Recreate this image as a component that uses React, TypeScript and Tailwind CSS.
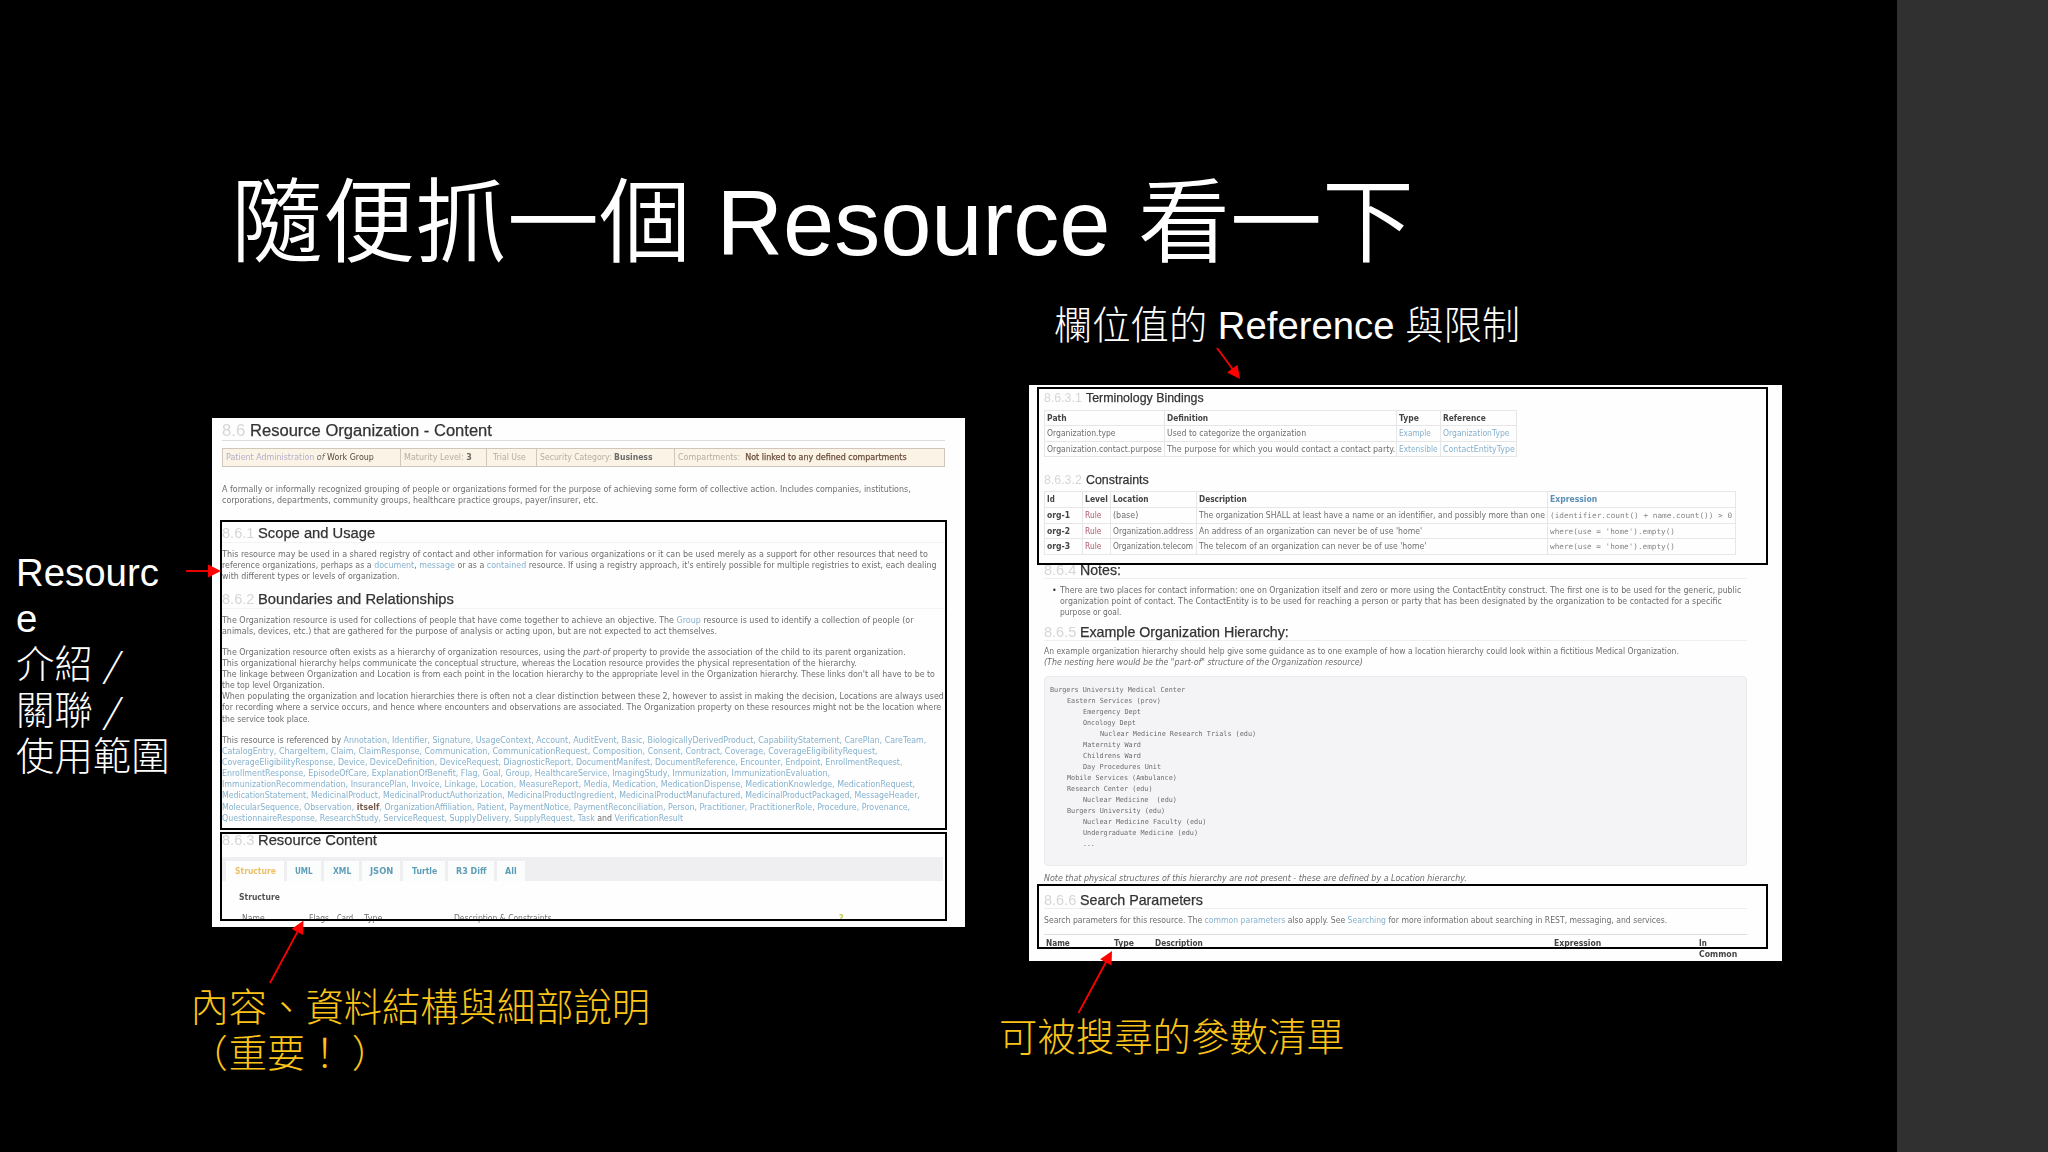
import { useLayoutEffect, useRef, useState, type ReactNode } from "react";

/* A single line of text condensed or expanded to an exact width. */
function Fit({ w, className = "", children }: { w: number; className?: string; children: ReactNode }) {
  const ref = useRef<HTMLSpanElement>(null);
  const [scale, setScale] = useState(1);
  useLayoutEffect(() => {
    if (ref.current) setScale(w / ref.current.offsetWidth);
  }, [w]);
  return (
    <div className={`whitespace-pre ${className}`} style={{ width: w }}>
      <span ref={ref} className="inline-block origin-left" style={{ transform: `scaleX(${scale})` }}>
        {children}
      </span>
    </div>
  );
}

function A({ children }: { children: ReactNode }) {
  return <span className="text-[#85b1cd]">{children}</span>;
}

function Heading({ num, numW, gap, w, className, children }: { num: string; numW: number; gap: string; w: number; className: string; children: ReactNode }) {
  return (
    <div className={`flex font-['Liberation_Sans',sans-serif] ${gap} ${className}`}>
      <Fit w={numW} className="text-[#d6d6d6]">{num}</Fit>
      <Fit w={w} className="text-[#333] [-webkit-text-stroke:0.25px_#333]">{children}</Fit>
    </div>
  );
}

const scopeLines: [number, ReactNode][] = [
  [706, "This resource may be used in a shared registry of contact and other information for various organizations or it can be used merely as a support for other resources that need to"],
  [714, <>reference organizations, perhaps as a <A>document</A>, <A>message</A> or as a <A>contained</A> resource. If using a registry approach, it's entirely possible for multiple registries to exist, each dealing</>],
  [178, "with different types or levels of organization."],
];
const boundaryLines: [number, ReactNode][] = [
  [691, <>The Organization resource is used for collections of people that have come together to achieve an objective. The <A>Group</A> resource is used to identify a collection of people (or</>],
  [495, "animals, devices, etc.) that are gathered for the purpose of analysis or acting upon, but are not expected to act themselves."],
];
const hierarchyLines: [number, ReactNode][] = [
  [684, <>The Organization resource often exists as a hierarchy of organization resources, using the <i>part-of</i> property to provide the association of the child to its parent organization.</>],
  [635, "This organizational hierarchy helps communicate the conceptual structure, whereas the Location resource provides the physical representation of the hierarchy."],
  [713, "The linkage between Organization and Location is from each point in the location hierarchy to the appropriate level in the Organization hierarchy. These links don't all have to be to"],
  [103, "the top level Organization."],
  [722, "When populating the organization and location hierarchies there is often not a clear distinction between these 2, however to assist in making the decision, Locations are always used"],
  [719, "for recording where a service occurs, and hence where encounters and observations are associated. The Organization property on these resources might not be the location where"],
  [88, "the service took place."],
];
const referencedLines: [number, ReactNode][] = [
  [704, <>This resource is referenced by <A>Annotation, Identifier, Signature, UsageContext, Account, AuditEvent, Basic, BiologicallyDerivedProduct, CapabilityStatement, CarePlan, CareTeam,</A></>],
  [656, <A>CatalogEntry, ChargeItem, Claim, ClaimResponse, Communication, CommunicationRequest, Composition, Consent, Contract, Coverage, CoverageEligibilityRequest,</A>],
  [680, <A>CoverageEligibilityResponse, Device, DeviceDefinition, DeviceRequest, DiagnosticReport, DocumentManifest, DocumentReference, Encounter, Endpoint, EnrollmentRequest,</A>],
  [608, <A>EnrollmentResponse, EpisodeOfCare, ExplanationOfBenefit, Flag, Goal, Group, HealthcareService, ImagingStudy, Immunization, ImmunizationEvaluation,</A>],
  [693, <A>ImmunizationRecommendation, InsurancePlan, Invoice, Linkage, Location, MeasureReport, Media, Medication, MedicationDispense, MedicationKnowledge, MedicationRequest,</A>],
  [698, <A>MedicationStatement, MedicinalProduct, MedicinalProductAuthorization, MedicinalProductIngredient, MedicinalProductManufactured, MedicinalProductPackaged, MessageHeader,</A>],
  [688, <><A>MolecularSequence, Observation, </A><b className="text-[#775c50]">itself</b><A>, OrganizationAffiliation, Patient, PaymentNotice, PaymentReconciliation, Person, Practitioner, PractitionerRole, Procedure, Provenance,</A></>],
  [461, <><A>QuestionnaireResponse, ResearchStudy, ServiceRequest, SupplyDelivery, SupplyRequest, Task</A> and <A>VerificationResult</A></>],
];

function Lines({ items, className = "" }: { items: [number, ReactNode][]; className?: string }) {
  return (
    <div className={className}>
      {items.map(([w, t], i) => (
        <Fit key={i} w={w}>{t}</Fit>
      ))}
    </div>
  );
}

const tabs: [string, number, string][] = [
  ["UML", 18, "w-[34px]"],
  ["XML", 18, "w-[35px]"],
  ["JSON", 23, "w-[38px]"],
  ["Turtle", 25, "w-[42px]"],
  ["R3 Diff", 30, "w-[46px]"],
  ["All", 12, "w-[28px]"],
];

function ContentPage() {
  return (
    <div className="h-[509px] w-[753px] overflow-hidden bg-[#fefefe]">
      <div className="flex w-[723px] flex-col pl-[10px] pt-[3px] text-[8px] leading-[11px] text-[#6d6d6d] blur-[0.55px] [box-sizing:content-box]">
        <Heading num="8.6" numW={23} gap="gap-[5px]" w={242} className="h-[20px] border-b border-[#dcdcdc] text-[16px] leading-[20px]">Resource Organization - Content</Heading>
        <div className="mt-[7px] grid h-[19px] grid-cols-[178px_86px_50px_138px_271px] divide-x divide-[#cfc8ba] border border-[#cfc8ba] bg-[#fbf4e6] [&>div]:pl-[3px] [&>div]:pt-[3px]">
          <div><Fit w={148}><span className="text-[#b3aeca]">Patient Administration</span> <i>of</i> <span className="text-[#55483c]">Work Group</span></Fit></div>
          <div><Fit w={68}><span className="text-[#b5aea0]">Maturity Level:</span> <b>3</b></Fit></div>
          <div className="!pl-[6px]"><Fit w={33} className="text-[#b5aea0]">Trial Use</Fit></div>
          <div><Fit w={113}><span className="text-[#b5aea0]">Security Category:</span> <b>Business</b></Fit></div>
          <div><Fit w={229}><span className="text-[#b5aea0]">Compartments:</span>  <span className="text-[#6b4e3c] [-webkit-text-stroke:0.25px_#6b4e3c]">Not linked to any defined compartments</span></Fit></div>
        </div>
        <Lines className="mt-[17px]" items={[
          [689, "A formally or informally recognized grouping of people or organizations formed for the purpose of achieving some form of collective action. Includes companies, institutions,"],
          [376, "corporations, departments, community groups, healthcare practice groups, payer/insurer, etc."],
        ]} />
        <Heading num="8.6.1" numW={32} gap="gap-[4px]" w={117} className="mt-[18px] h-[19px] border-b border-[#f3f3f3] text-[15.5px] leading-[18px]">Scope and Usage</Heading>
        <Lines className="mt-[6px]" items={scopeLines} />
        <Heading num="8.6.2" numW={32} gap="gap-[4px]" w={196} className="mt-[8px] h-[19px] border-b border-[#f3f3f3] text-[15.5px] leading-[18px]">Boundaries and Relationships</Heading>
        <Lines className="mt-[6px]" items={boundaryLines} />
        <Lines className="mt-[10px] leading-[11.1px]" items={hierarchyLines} />
        <Lines className="mt-[10px] leading-[11.15px]" items={referencedLines} />
        <Heading num="8.6.3" numW={32} gap="gap-[4px]" w={119} className="mt-[7.5px] h-[19px] text-[15.5px] leading-[18px]">Resource Content</Heading>
        <div className="mt-[7px] flex h-[24px] w-[721px] gap-[3px] bg-[#efeef0] pl-[4px] pt-[4px] font-bold">
          <div className="flex w-[58px] items-center justify-center bg-[#fefefe] text-[#eac069]"><Fit w={41}>Structure</Fit></div>
          {tabs.map(([t, w, cls]) => (
            <div key={t} className={`flex items-center justify-center bg-[#fbfdfd] text-[#5d9db8] ${cls}`}><Fit w={w}>{t}</Fit></div>
          ))}
        </div>
        <Fit w={41} className="ml-[17px] mt-[11px] font-bold text-[#555]">Structure</Fit>
        <div className="mt-[10px] grid grid-cols-[67px_28px_27px_90px_385px_20px] pl-[20px]">
          <Fit w={23}>Name</Fit>
          <Fit w={20}>Flags</Fit>
          <Fit w={18}>Card.</Fit>
          <Fit w={18}>Type</Fit>
          <Fit w={98}>Description &amp; Constraints</Fit>
          <b className="text-[#c3cc4b]">?</b>
        </div>
      </div>
    </div>
  );
}

const orgTree: [number, string, number][] = [
  [0, "Burgers University Medical Center", 135],
  [1, "Eastern Services (prov)", 94],
  [2, "Emergency Dept", 58],
  [2, "Oncology Dept", 53],
  [3, "Nuclear Medicine Research Trials (edu)", 156],
  [2, "Maternity Ward", 58],
  [2, "Childrens Ward", 58],
  [2, "Day Procedures Unit", 78],
  [1, "Mobile Services (Ambulance)", 110],
  [1, "Research Center (edu)", 86],
  [2, "Nuclear Medicine  (edu)", 94],
  [1, "Burgers University (edu)", 98],
  [2, "Nuclear Medicine Faculty (edu)", 123],
  [2, "Undergraduate Medicine (edu)", 115],
  [2, "...", 12],
];
const indent = ["pl-0", "pl-[16.5px]", "pl-[33px]", "pl-[49.5px]"];

const constraints: [string, string, number, string, number, string, number][] = [
  ["org-1", "(base)", 25, "The organization SHALL at least have a name or an identifier, and possibly more than one", 346, "(identifier.count() + name.count()) > 0", 182],
  ["org-2", "Organization.address", 80, "An address of an organization can never be of use 'home'", 223, "where(use = 'home').empty()", 125],
  ["org-3", "Organization.telecom", 80, "The telecom of an organization can never be of use 'home'", 227, "where(use = 'home').empty()", 125],
];

function BindingsPage() {
  return (
    <div className="h-[575.5px] w-[753px] overflow-hidden bg-[#fefefe]">
      <div className="flex w-[703px] flex-col pl-[15px] pt-[5px] text-[8px] leading-[11px] text-[#6d6d6d] blur-[0.55px] [box-sizing:content-box]">
        <Heading num="8.6.3.1" numW={38} gap="gap-[4px]" w={118} className="h-[16px] text-[13px] leading-[16px]">Terminology Bindings</Heading>
        <div className="mt-[4px] w-[473px] border-x border-b border-[#e6e6e6] [&>div]:grid [&>div]:grid-cols-[120px_232px_44px_77px] [&>div]:divide-x [&>div]:divide-[#e6e6e6] [&>div]:border-t [&>div]:border-[#e6e6e6] [&>div>div]:pl-[2px] [&>div>div]:pt-[1.5px]">
          <div className="h-[15px] font-bold text-[#444]">
            <div><Fit w={20}>Path</Fit></div>
            <div><Fit w={41}>Definition</Fit></div>
            <div><Fit w={20}>Type</Fit></div>
            <div><Fit w={43}>Reference</Fit></div>
          </div>
          <div className="h-[16px]">
            <div><Fit w={69}>Organization.type</Fit></div>
            <div><Fit w={139}>Used to categorize the organization</Fit></div>
            <div><Fit w={32}><A>Example</A></Fit></div>
            <div><Fit w={67}><A>OrganizationType</A></Fit></div>
          </div>
          <div className="h-[15px]">
            <div><Fit w={115}>Organization.contact.purpose</Fit></div>
            <div><Fit w={228}>The purpose for which you would contact a contact party.</Fit></div>
            <div><Fit w={39}><A>Extensible</A></Fit></div>
            <div><Fit w={72}><A>ContactEntityType</A></Fit></div>
          </div>
        </div>
        <Heading num="8.6.3.2" numW={38} gap="gap-[4px]" w={63} className="mt-[15px] h-[16px] text-[13px] leading-[16px]">Constraints</Heading>
        <div className="mt-[3px] w-[692px] border-x border-b border-[#e9e6e9] [&>div]:grid [&>div]:grid-cols-[38px_28px_86px_351px_189px] [&>div]:divide-x [&>div]:divide-[#e9e6e9] [&>div]:border-t [&>div]:border-[#e9e6e9] [&>div>div]:pl-[2px] [&>div>div]:pt-[2px]">
          <div className="h-[16px] font-bold text-[#444]">
            <div><Fit w={8}>Id</Fit></div>
            <div><Fit w={23}>Level</Fit></div>
            <div><Fit w={36}>Location</Fit></div>
            <div><Fit w={48}>Description</Fit></div>
            <div className="text-[#5b8fb4]"><Fit w={47}>Expression</Fit></div>
          </div>
          {constraints.map(([id, loc, lw, desc, dw, expr, ew]) => (
            <div key={id} className="h-[15.7px]">
              <div><Fit w={23} className="font-bold text-[#444]">{id}</Fit></div>
              <div><Fit w={16} className="text-[#b0596c]">Rule</Fit></div>
              <div><Fit w={lw}>{loc}</Fit></div>
              <div><Fit w={dw}>{desc}</Fit></div>
              <div><Fit w={ew} className="font-['DejaVu_Sans_Mono',monospace] text-[7.5px] text-[#858585]">{expr}</Fit></div>
            </div>
          ))}
        </div>
        <Heading num="8.6.4" numW={32} gap="gap-[4px]" w={41} className="mt-[5.5px] h-[18px] border-b border-[#eeeeee] text-[14.5px] leading-[18px]">Notes:</Heading>
        <div className="mt-[6px] flex">
          <div className="w-[16px] pl-[8px] text-[#333]">•</div>
          <Lines items={[
            [681, "There are two places for contact information: one on Organization itself and zero or more using the ContactEntity construct. The first one is to be used for the generic, public"],
            [662, "organization point of contact. The ContactEntity is to be used for reaching a person or party that has been designated by the organization to be contacted for a specific"],
            [61, "purpose or goal."],
          ]} />
        </div>
        <Heading num="8.6.5" numW={32} gap="gap-[4px]" w={209} className="mt-[5px] h-[18px] border-b border-[#eeeeee] text-[14.5px] leading-[18px]">Example Organization Hierarchy:</Heading>
        <Lines className="mt-[5.5px]" items={[
          [635, "An example organization hierarchy should help give some guidance as to one example of how a location hierarchy could look within a fictitious Medical Organization."],
          [319, <i>(The nesting here would be the "part-of" structure of the Organization resource)</i>],
        ]} />
        <div className="mt-[8px] h-[190px] rounded-sm border border-[#eae9eb] bg-[#f4f3f5] pl-[5px] pt-[7.5px] font-['DejaVu_Sans_Mono',monospace] text-[7px]">
          {orgTree.map(([level, text, w], i) => (
            <div key={i} className={indent[level]}><Fit w={w}>{text}</Fit></div>
          ))}
        </div>
        <Fit w={423} className="mt-[7px] italic">Note that physical structures of this hierarchy are not present - these are defined by a Location hierarchy.</Fit>
        <Heading num="8.6.6" numW={32} gap="gap-[4px]" w={123} className="mt-[7px] h-[18px] border-b border-[#eeeeee] text-[14.5px] leading-[18px]">Search Parameters</Heading>
        <Fit w={623} className="mt-[6px]">Search parameters for this resource. The <A>common parameters</A> also apply. See <A>Searching</A> for more information about searching in REST, messaging, and services.</Fit>
        <div className="mt-[8px] grid grid-cols-[68px_41px_399px_145px_40px] border-t border-[#dddddd] pl-[2px] pt-[3px] font-bold text-[#444]">
          <Fit w={24}>Name</Fit>
          <Fit w={20}>Type</Fit>
          <Fit w={48}>Description</Fit>
          <Fit w={47}>Expression</Fit>
          <div><Fit w={8}>In</Fit><Fit w={38}>Common</Fit></div>
        </div>
      </div>
    </div>
  );
}

/* Pointer from a caption (x1, y1) to the tip (x2, y2). */
function Arrow({ x1, y1, x2, y2 }: { x1: number; y1: number; x2: number; y2: number }) {
  const len = Math.hypot(x2 - x1, y2 - y1);
  const angle = (Math.atan2(y2 - y1, x2 - x1) * 180) / Math.PI;
  return (
    <g transform={`translate(${x1} ${y1}) rotate(${angle})`}>
      <path d={`M0 0H${len - 10}`} stroke="#f00" strokeWidth="1.8" />
      <path d={`M${len} 0L${len - 13} -6.5V6.5Z`} fill="#f00" />
    </g>
  );
}

function Slash() {
  return <span className="font-['Noto_Sans_CJK_TC',sans-serif] text-[34px] font-[350] italic leading-[0]">/</span>;
}

export default function App() {
  return (
    <div lang="zh-Hant" className="relative flex h-[1152px] w-[2048px] justify-end overflow-hidden bg-black font-['DejaVu_Sans',sans-serif]">
      <div className="h-full w-[151px] bg-[#303030]" />

      <div className="absolute left-[212px] top-[418px]"><ContentPage /></div>
      <div className="absolute left-[1029px] top-[385px]"><BindingsPage /></div>

      <div className="absolute left-[220px] top-[520px] h-[310px] w-[727px] border-2 border-black" />
      <div className="absolute left-[220px] top-[832px] h-[89px] w-[727px] border-2 border-black" />
      <div className="absolute left-[1037px] top-[387px] h-[178px] w-[731px] border-2 border-black" />
      <div className="absolute left-[1037px] top-[884px] h-[65px] w-[731px] border-2 border-black" />

      <div className="font-['Liberation_Sans','Noto_Sans_CJK_TC',sans-serif] text-[38.4px] font-light leading-[46px] text-white">
        <h1 className="absolute left-[231px] top-[168px] whitespace-nowrap text-[92px] font-[350] leading-[110px]">
          隨便抓一個 Resource <span className="ml-[2px]">看一下</span>
        </h1>
        <p className="absolute left-[1054px] top-[303px] whitespace-nowrap text-[38.3px]">欄位值的 Reference 與限制</p>
        <p className="absolute left-[16px] top-[550px] w-[160px] break-all">
          Resource<br />介紹 <Slash /><br />關聯 <Slash /><br />使用範圍
        </p>
        <p className="absolute left-[190.5px] top-[985px] whitespace-nowrap text-[38.3px] text-[#fcc419]">
          內容、資料結構與細部說明<br />
          <span className="relative -left-[1px]">（</span>重要！<span className="relative left-[8px]">）</span>
        </p>
        <p className="absolute left-[999px] top-[1015px] whitespace-nowrap text-[#fcc419]">可被搜尋的參數清單</p>
      </div>

      <svg className="absolute inset-0" width="2048" height="1152" viewBox="0 0 2048 1152" fill="none">
        <Arrow x1={186} y1={571} x2={221} y2={571} />
        <Arrow x1={270} y1={983} x2={303.5} y2={920.5} />
        <Arrow x1={1078.5} y1={1013} x2={1112} y2={951} />
        <Arrow x1={1217} y1={348} x2={1240} y2={379} />
      </svg>
    </div>
  );
}
